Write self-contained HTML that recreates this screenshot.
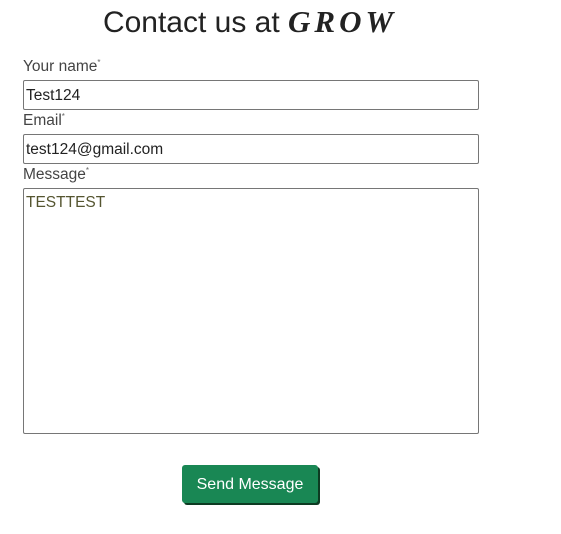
<!DOCTYPE html>
<html><head><style>
body{margin:0;background:#fff;font-family:"Liberation Sans",sans-serif;color:#333;}
.t{position:absolute;left:0;width:500px;text-align:center;top:4px;font-size:30px;color:#222;}
.t b{font-family:"Liberation Serif",serif;font-style:italic;letter-spacing:4px;font-size:31px;}
.l{position:absolute;left:23px;font-size:15.5px;color:#444;}
.l sup{font-size:8px;color:#666;}
.i{position:absolute;left:23px;width:456px;border:1px solid #767676;border-radius:2px;box-sizing:border-box;font-size:15.5px;color:#222;padding:0 0 0 2px;}
.btn{position:absolute;left:182px;top:465px;width:136px;height:38px;background:#198754;border-radius:3px;color:#fff;font-size:16px;text-align:center;line-height:39px;box-shadow:2px 2px 0 #0d3b22;}
</style></head><body>
<div class="t">Contact us at <b>GROW</b></div>
<div class="l" style="top:58px">Your name<sup>*</sup></div>
<div class="i" style="top:80px;height:30px;line-height:30px">Test124</div>
<div class="l" style="top:112px">Email<sup>*</sup></div>
<div class="i" style="top:134px;height:30px;line-height:30px">test124@gmail.com</div>
<div class="l" style="top:166px">Message<sup>*</sup></div>
<div class="i" style="top:188px;height:246px;padding-top:5px;color:#555530">TESTTEST</div>
<div class="btn">Send Message</div>
</body></html>
